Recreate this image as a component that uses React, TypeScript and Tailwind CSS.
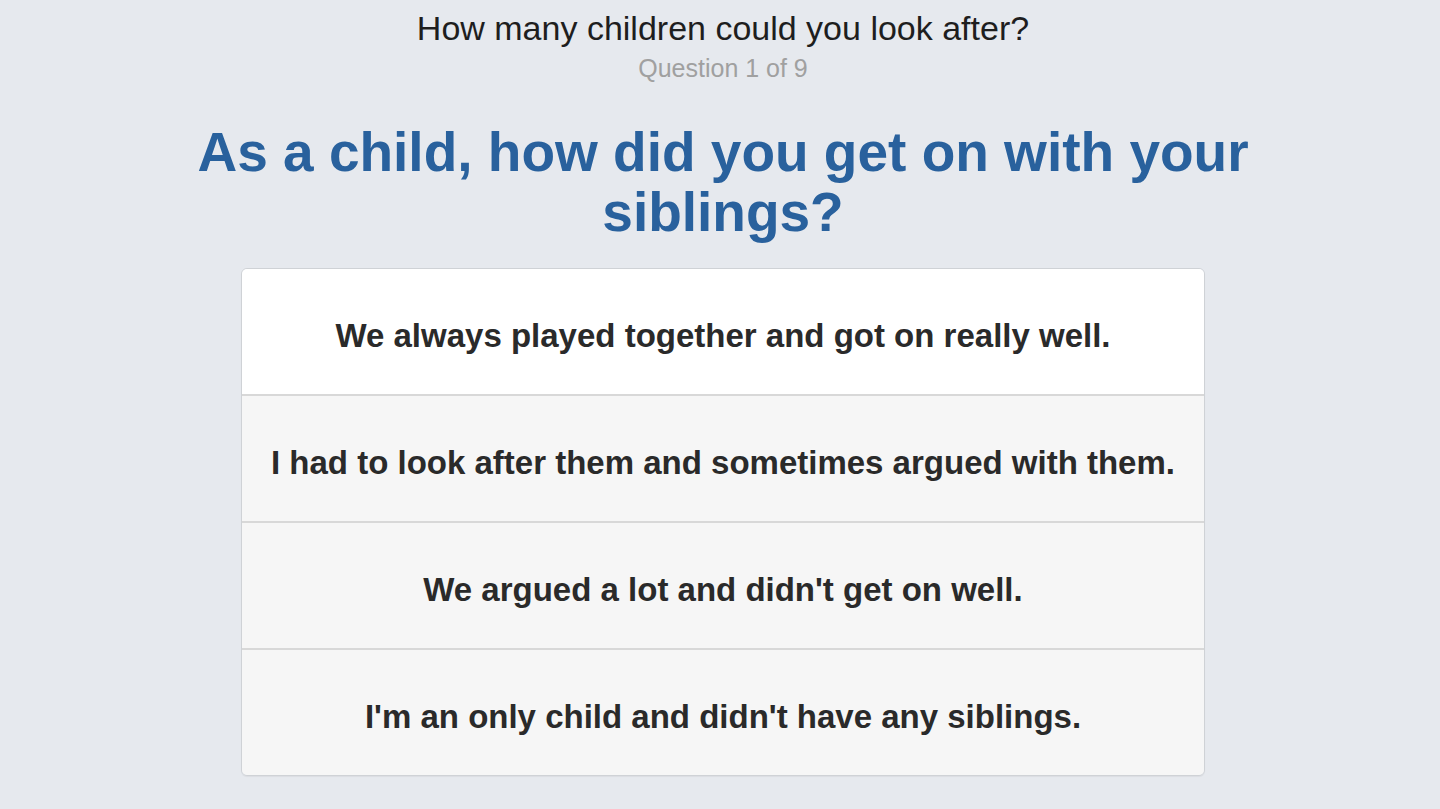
const OPTIONS = [
  "We always played together and got on really well.",
  "I had to look after them and sometimes argued with them.",
  "We argued a lot and didn't get on well.",
  "I'm an only child and didn't have any siblings.",
];

export default function App() {
  return (
    <div
      className="min-h-[809px] bg-[#e6e9ee] flex flex-col items-center pl-[6px]"
      style={{ fontFamily: "'Liberation Sans', Arial, sans-serif" }}
    >
      <div className="pt-[8px] text-[34px] leading-[40px] text-[#1e1e1e]">
        How many children could you look after?
      </div>
      <div className="mt-[5px] text-[25px] leading-[30px] text-[#a0a0a0]">
        Question 1 of 9
      </div>

      <h1 className="mt-[39px] w-[1100px] text-center text-[55px] leading-[60px] font-bold text-[#29619d]">
        As a child, how did you get on with your siblings?
      </h1>

      <div className="mt-[26px] w-[964px] rounded-[6px] border border-[#cfd2d6] overflow-hidden shadow-[0_1px_1px_rgba(0,0,0,0.05)]">
        {OPTIONS.map((text, i) => (
          <div
            key={text}
            className={
              "pt-[8px] flex items-center justify-center text-[33px] font-bold text-[#2a2a2a] " +
              (i === 0 ? "h-[125px] bg-white" : "h-[127px] bg-[#f6f6f6] border-t-2 border-[#d8d8d8]")
            }
          >
            {text}
          </div>
        ))}
      </div>
    </div>
  );
}
